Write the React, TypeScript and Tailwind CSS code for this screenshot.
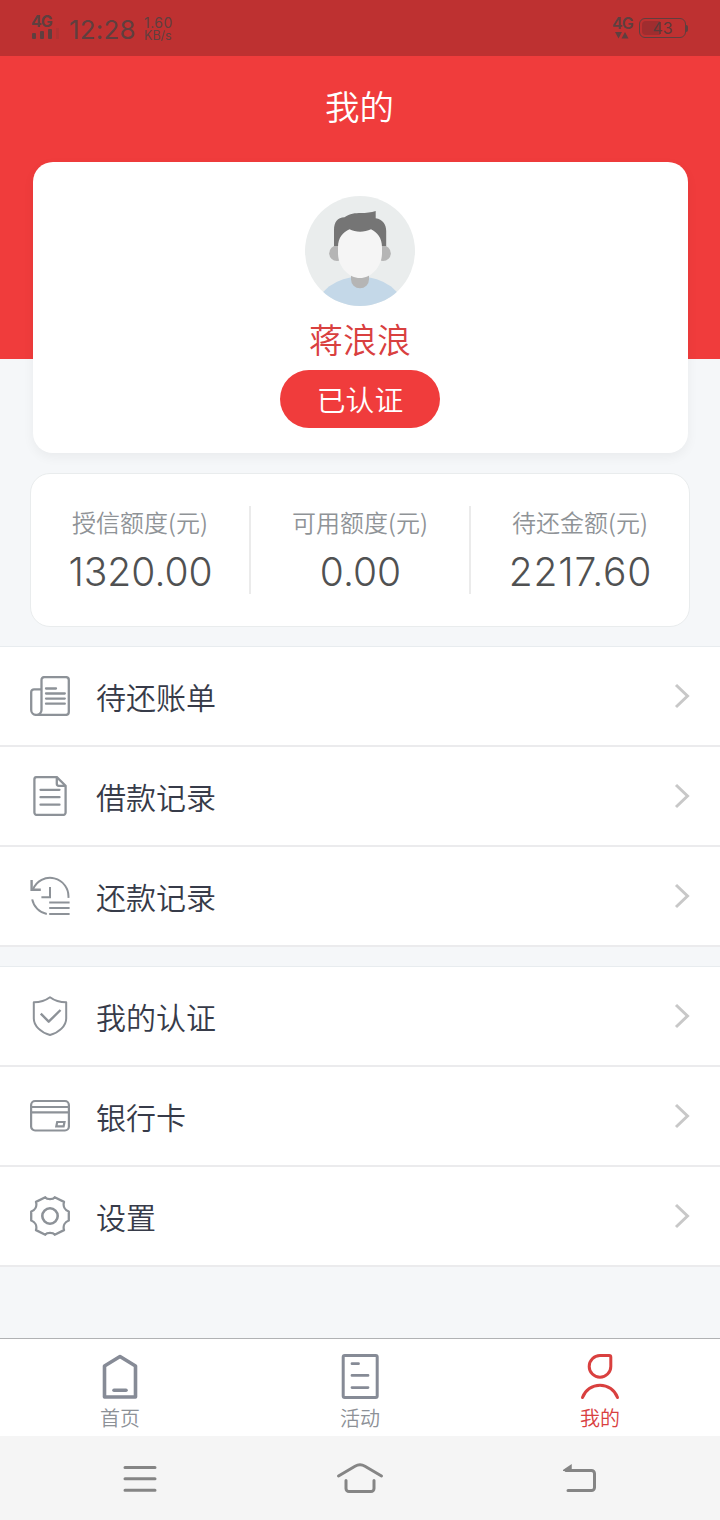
import React from 'react';

const BillIcon = () => (
  <svg className="size-10" viewBox="0 0 40 40" fill="none" stroke="#8d9298" strokeWidth="2.3" strokeLinecap="round">
    <path d="M11.5 13.3H4a2.8 2.8 0 0 0-2.8 2.8V34a4.9 4.9 0 0 0 4.9 4.9H36a2.8 2.8 0 0 0 2.8-2.8V3.9A2.8 2.8 0 0 0 36 1.1H14.3a2.8 2.8 0 0 0-2.8 2.8V34a4.9 4.9 0 0 1-5.2 4.9" />
    <path d="M16 12.5h10M16 17.5h18.8M16 22.6h18.8M16 27.7h18.8" />
  </svg>
);

const RecordIcon = () => (
  <svg className="size-10" viewBox="0 0 40 40" fill="none" stroke="#8d9298" strokeWidth="2.3" strokeLinecap="round" strokeLinejoin="round">
    <path d="M26.8 1.1H6.8a2.4 2.4 0 0 0-2.4 2.4v33a2.4 2.4 0 0 0 2.4 2.4h26.4a2.4 2.4 0 0 0 2.4-2.4V9.8zM26.8 1.1v6.7a2 2 0 0 0 2 2h6.8" />
    <path d="M10.5 13.8h19M10.5 21.2h19M10.5 28.7h19" />
  </svg>
);

const HistoryIcon = () => (
  <svg className="size-10" viewBox="0 0 40 40" fill="none" stroke="#8d9298" strokeWidth="2">
    <path d="M3 13.4A18.4 18.4 0 0 1 38.4 21.8M2.2 23.4A18.6 18.6 0 0 0 16.8 38" />
    <path d="M1.6 4v9.7h9.2" strokeWidth="2.4" />
    <path d="M20 11v10.3h-8.6M19.2 26.4h20.4M19.2 32h20.4M19.2 38h20.4" />
  </svg>
);

const ShieldIcon = () => (
  <svg className="size-10" viewBox="0 0 40 40" fill="none" stroke="#8d9298" strokeWidth="2" strokeLinejoin="round">
    <path d="M20 1.2C15.5 4.5 9.5 6.2 3.8 6.3v16.2C3.8 30 11 36.5 20 39c9-2.5 16.2-9 16.2-16.5V6.3C30.5 6.2 24.5 4.5 20 1.2z" />
    <path d="m10.8 17.6 7.9 8.1L30.5 14" strokeWidth="2.4" />
  </svg>
);

const CardIcon = () => (
  <svg className="size-10" viewBox="0 0 40 40" fill="none" stroke="#8d9298" strokeWidth="2.2">
    <rect x="1.1" y="5" width="37.8" height="29.5" rx="4" />
    <path d="M1 11h38M1 16.3h38M27.2 26h7.3l-.9 4.4h-7.3z" />
  </svg>
);

const GearIcon = () => (
  <svg className="size-10" viewBox="0 0 40 40" fill="none" stroke="#8d9298" strokeWidth="2.3" strokeLinejoin="round">
    <path d="M15.3 1.3c1.7 2.4 7.7 2.4 9.4 0l9.3 4.6c-1.2 4.2.8 8.1 4.8 9.6v9c-4 1.5-6 5.4-4.8 9.6l-9.3 4.6c-1.7-2.4-7.7-2.4-9.4 0L6 34.1c1.2-4.2-.8-8.1-4.8-9.6v-9C5.2 14 7.2 10.1 6 5.9z" />
    <circle cx="20" cy="20" r="7.7" strokeWidth="2.6" />
  </svg>
);

const Chevron = () => (
  <svg className="w-4 h-7" viewBox="0 0 16 28" fill="none" stroke="#c8c8c8" strokeWidth="3">
    <path d="m2 3 11.5 11L2 25" />
  </svg>
);

const Avatar = () => (
  <svg className="size-[110px]" viewBox="0 0 110 110">
    <defs>
      <clipPath id="avatar">
        <circle cx="55" cy="55" r="55" />
      </clipPath>
    </defs>
    <g clipPath="url(#avatar)">
      <rect width="110" height="110" fill="#eaeded" />
      <ellipse cx="55" cy="115" rx="44" ry="34.5" fill="#c4d8e8" />
      <path d="M46 78h18v5.5a9 8.8 0 0 1-18 0z" fill="#b5b5b5" />
      <circle cx="32" cy="57.3" r="7.8" fill="#b5b5b5" />
      <circle cx="78" cy="57.3" r="7.8" fill="#b5b5b5" />
      <path d="M29 50V34c0-8 3.5-12.5 10.5-12.8C45 17.5 50 17 56 17c5 0 10-.5 14.700-2v7.300C77.500 23.500 81.200 28 81.200 35v15H29z" fill="#757575" />
      <path d="M33 51c0-9 5-15 11.500-17.700 6 3.200 15 3.200 21.500 0C72 36 77 42 77 51v6c0 14-11 25-22 25S33 71 33 57z" fill="#f5f5f5" />
    </g>
  </svg>
);

const HomeTabIcon = () => (
  <svg className="size-12" viewBox="0 0 48 48" fill="none" stroke="#868b96" strokeWidth="3.6" strokeLinejoin="round">
    <path d="M24 3.5 8.5 13v31h31V13z" />
    <path d="M18 37.3h12" strokeLinecap="round" />
  </svg>
);

const ActivityTabIcon = () => (
  <svg className="size-12" viewBox="0 0 48 48" fill="none" stroke="#868b96" strokeWidth="3" strokeLinecap="round">
    <rect x="7.2" y="2.6" width="34" height="42" rx="1.5" />
    <path d="M16 10.7h6.5M16 22.4h16M16 34.6h16" strokeWidth="2.8" />
  </svg>
);

const MineTabIcon = () => (
  <svg className="size-12" viewBox="0 0 48 48" fill="none" stroke="#d9403f" strokeWidth="3" strokeLinecap="round">
    <path d="M24 2.6h9.2a1.6 1.6 0 0 1 1.6 1.6v9.2A10.8 10.8 0 1 1 24 2.6z" />
    <path d="M6.5 44.5a18.6 18.6 0 0 1 35 0" />
  </svg>
);

const stats = [
  { label: '授信额度(元)', value: '1320.00', spacing: 'tracking-normal' },
  { label: '可用额度(元)', value: '0.00', spacing: 'tracking-normal' },
  { label: '待还金额(元)', value: '2217.60', spacing: 'tracking-[0.8px]' },
];

const billMenu = [
  { label: '待还账单', icon: <BillIcon /> },
  { label: '借款记录', icon: <RecordIcon /> },
  { label: '还款记录', icon: <HistoryIcon /> },
];

const accountMenu = [
  { label: '我的认证', icon: <ShieldIcon /> },
  { label: '银行卡', icon: <CardIcon /> },
  { label: '设置', icon: <GearIcon /> },
];

const tabs = [
  { label: '首页', icon: <HomeTabIcon />, active: false },
  { label: '活动', icon: <ActivityTabIcon />, active: false },
  { label: '我的', icon: <MineTabIcon />, active: true },
];

const StatusBar = () => (
  <div className="h-14 bg-[#be3131] text-[#5f3f3f] font-['Inter',sans-serif] flex justify-between pl-[31px] pr-8">
    <div className="flex">
      <div className="pt-[14px] w-[38px]">
        <p className="text-[16px] leading-[14px] font-bold tracking-[-1px]">4G</p>
        <svg className="w-7 h-[14px]" viewBox="0 0 28 14" fill="currentColor">
          <rect x="1" y="5" width="4" height="6" rx="1" />
          <rect x="9" y="3" width="4" height="8" rx="1" />
          <rect x="17" y="1" width="4" height="10" rx="1" />
          <rect x="25" y="-5" width="3" height="16" opacity="0.15" />
        </svg>
      </div>
      <p className="w-[75px] pt-[14px] text-[26px] leading-8 font-normal tracking-[0.2px]">12:28</p>
      <div className="pt-4 font-normal">
        <p className="text-[14px] leading-[14px] tracking-[0.5px]">1.60</p>
        <p className="text-[12.5px] leading-[11px]">KB/s</p>
      </div>
    </div>
    <div className="flex">
      <div className="pt-4 w-[27px]">
        <p className="text-[16px] leading-[14px] font-semibold tracking-[-1px]">4G</p>
        <svg className="w-5 h-[10px]" viewBox="0 0 20 10" fill="currentColor">
          <path d="M3 2h7L6.5 8.5zM9.5 8.5h7L13 2z" />
        </svg>
      </div>
      <div className="flex items-center mt-[18px] h-5">
        <div className="relative w-[47px] h-5 border-[1.5px] border-[#5f3f3f] rounded-md flex items-center justify-center">
          <span className="absolute left-[2px] top-[2px] w-[18px] h-[14px] rounded-l-sm bg-[#a02d2f]" />
          <span className="relative text-[16px] leading-4 font-normal text-[#5a3a3a]">43</span>
        </div>
        <span className="w-[2px] h-[7px] bg-[#5f3f3f] rounded-r-sm" />
      </div>
    </div>
  </div>
);

const MenuList = ({ items }: { items: { label: string; icon: React.ReactNode }[] }) => (
  <div className="bg-white border-t border-[#e8ecef]">
    {items.map((item) => (
      <div key={item.label} className="flex items-center h-[100px] px-[30px] border-b-2 border-[#ebebed]">
        {item.icon}
        <p className="flex-1 pl-[26px] pb-px text-[30px] leading-10 text-[#373b49]">{item.label}</p>
        <Chevron />
      </div>
    ))}
  </div>
);

export default function App() {
  return (
    <div className="w-[720px] h-[1520px] flex flex-col bg-[#f5f7f9] font-['Noto_Sans_CJK_SC',sans-serif] font-[350] overflow-hidden">
      <StatusBar />
      <div className="h-[303px] shrink-0 bg-[#f03c3c]">
        <h1 className="pt-[25px] pr-px text-center text-[34.5px] leading-[48px] font-[350] text-white">我的</h1>
      </div>

      <div className="-mt-[197px] ml-[33px] mr-8 h-[291px] shrink-0 rounded-[20px] bg-white shadow-[0_4px_12px_rgba(0,0,0,0.05)] flex flex-col items-center pt-[34px] pr-px">
        <Avatar />
        <p className="mt-2 text-[34px] leading-[50px] text-[#d9403f]">蒋浪浪</p>
        <button className="mt-[6px] w-40 h-[58px] rounded-full bg-[#f03c3c] text-[28.8px] leading-[58px] font-[350] text-white">已认证</button>
      </div>

      <div className="mt-5 mx-[30px] h-[154px] shrink-0 rounded-[20px] bg-white border border-[#e9eced] flex items-center">
        {stats.map((stat, i) => (
          <React.Fragment key={stat.label}>
            {i > 0 && <span className="w-0.5 h-[88px] bg-[#ebebeb]" />}
            <div className="flex-1 text-center pt-[2px]">
              <p className="text-[24px] leading-8 text-[#8f9397]">{stat.label}</p>
              <p className={`mt-[10px] pl-px font-['Inter',sans-serif] font-light text-[39px] leading-[48px] text-[#505152] ${stat.spacing}`}>
                {stat.value}
              </p>
            </div>
          </React.Fragment>
        ))}
      </div>

      <div className="mt-[19px] flex flex-col gap-[19px]">
        <MenuList items={billMenu} />
        <MenuList items={accountMenu} />
      </div>

      <div className="mt-auto h-[98px] shrink-0 bg-white border-t border-[#b0b2b4] grid grid-cols-3">
        {tabs.map((tab) => (
          <div key={tab.label} className="flex flex-col items-center pt-[14px]">
            {tab.icon}
            <p className={tab.active ? 'mt-[3px] text-[20px] leading-7 text-[#d9403f]' : 'mt-[3px] text-[20px] leading-7 text-[#8d9197]'}>
              {tab.label}
            </p>
          </div>
        ))}
      </div>

      <div className="h-[84px] shrink-0 bg-[#f5f5f5] grid grid-cols-3 px-5">
        <div className="flex items-center justify-center">
          <svg className="w-12 h-10 fill-none stroke-[#858585] stroke-[3]" viewBox="0 0 48 40" strokeLinecap="round">
            <path d="M16 9.5h30M16 20.8h30M16 32.2h30" />
          </svg>
        </div>
        <div className="flex items-center justify-center">
          <svg className="w-12 h-10 fill-none stroke-[#858585] stroke-[3]" viewBox="0 0 48 40" strokeLinecap="round">
            <path d="M2.5 18 19 8.2q5-2.800 10 0L45.500 18M10 22.500v8a3 3 0 0 0 3 3h22a3 3 0 0 0 3-3v-8" />
          </svg>
        </div>
        <div className="flex items-center justify-center">
          <svg className="w-12 h-10 fill-none stroke-[#858585] stroke-[3]" viewBox="0 0 48 40" strokeLinecap="round">
            <path d="M3 12.500h25.500a3 3 0 0 1 3 3v14a3 3 0 0 1-3 3H5" />
            <path d="m1 12.200 7-4.700v4.700z" strokeWidth="1.500" fill="#858585" />
          </svg>
        </div>
      </div>
    </div>
  );
}
